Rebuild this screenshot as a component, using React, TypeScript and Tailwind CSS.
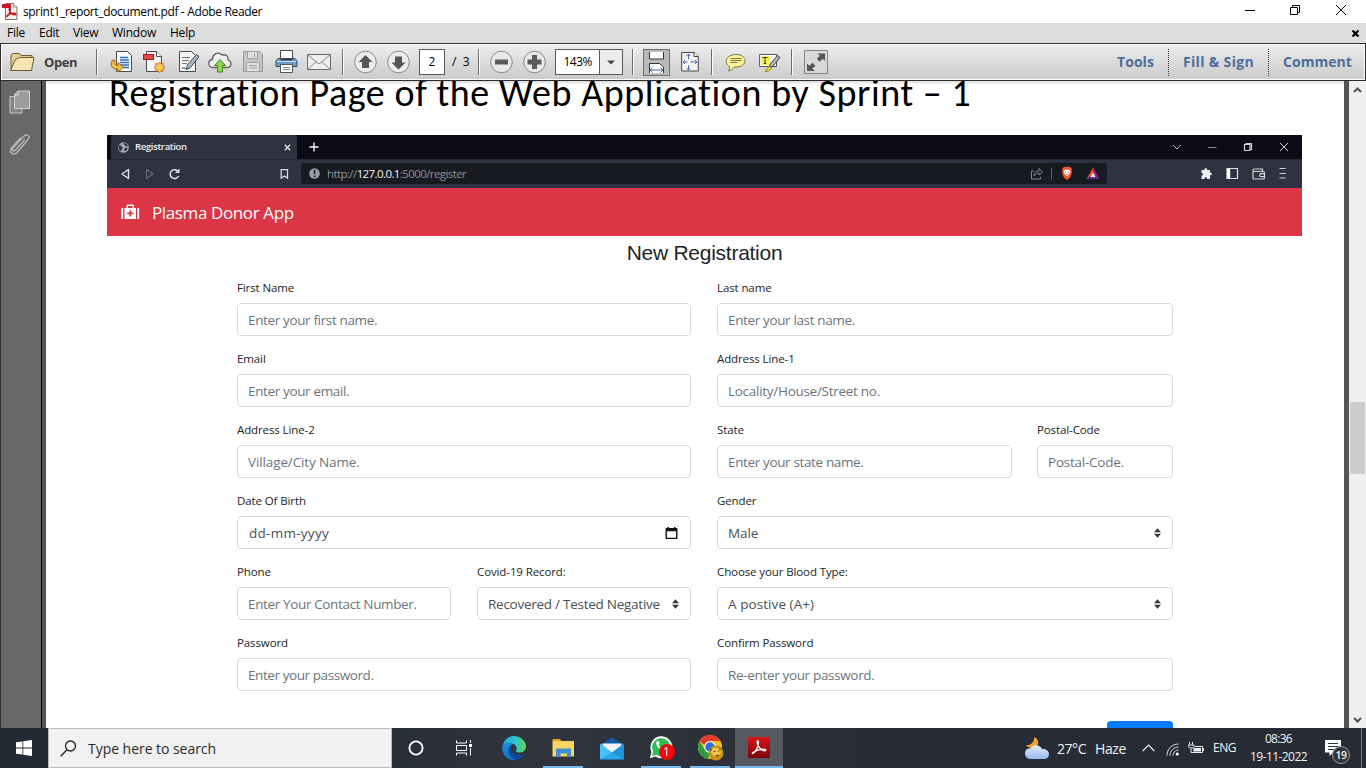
import React from "react";

const UI = "font-['Open_Sans',sans-serif] whitespace-pre";

/* ---------- Reader window ---------- */

function PdfIcon() {
  return (
    <svg className="-mt-px -ml-px" width="16" height="17" viewBox="0 0 16 17">
      <path d="M3.5 .5h8l3.5 3.500v12.500h-11.500z" fill="#f7eeee" stroke="#8d6b6b" strokeWidth="1" />
      <path d="M11.500 .5v3.500h3.500" fill="#fff" stroke="#8d6b6b" strokeWidth=".8" />
      <rect x="0" y="1" width="9" height="4" fill="#c41e24" />
      <path d="M4.500 14C6.500 13 8.500 9 8.300 6c-.3-1.500-1.500-.5-.9 1.200 1 2.600 3 4.600 5.600 4.600 1.500-.2 1-1.500-.9-1.500-2.900 0-5.500 1-7.600 2.500" fill="none" stroke="#c01a20" strokeWidth="1.500" />
    </svg>
  );
}

function TitleBar() {
  return (
    <div className="flex h-[23px] items-center bg-white pl-[3px]">
      <PdfIcon />
      <span className={"ml-[5px] text-[12px] leading-none tracking-[-0.345px] text-black " + UI}>sprint1_report_document.pdf - Adobe Reader</span>
      <svg className="-mt-[3px] mr-px ml-auto" width="120" height="20" viewBox="0 0 120 20" fill="none" stroke="#000">
        <path d="M0 10.500h10M45.500 7.500h7v7h-7zM47.500 7.500v-2h7v7h-2M91 5l10 10M101 5l-10 10" />
      </svg>
    </div>
  );
}

function MenuBar() {
  const item = "text-[12px] leading-none tracking-[-0.23px] text-black " + UI;
  return (
    <div className="flex h-[20px] items-center bg-[#dddddd] pl-[7px]">
      <span className={"w-[32px] " + item}>File</span>
      <span className={"w-[34px] " + item}>Edit</span>
      <span className={"w-[39px] " + item}>View</span>
      <span className={"w-[58px] " + item}>Window</span>
      <span className={item}>Help</span>
      <svg className="mr-[7px] ml-auto" width="7" height="7" viewBox="0 0 7 7" stroke="#000" strokeWidth="2.200">
        <path d="M.5 .5l6 6M6.500 .5l-6 6" />
      </svg>
    </div>
  );
}

const Ico = ({ m, w, children }: { m: string; w: number; children: React.ReactNode }) => (
  <svg className={"shrink-0 " + m} width={w} height="26" viewBox={`0 0 ${w} 26`} fill="none">
    {children}
  </svg>
);

const Sep = ({ m }: { m: string }) => <div className={"h-[26px] w-[2px] shrink-0 border-r border-l border-r-white border-l-[#6b6b6b] " + m} />;

function Toolbar() {
  return (
    <div className="flex h-[38px] items-center border border-[#2c2c30] bg-white p-px">
      <div className="flex h-full w-full items-center bg-linear-to-b from-[#ededed] to-[#cbcbcb]">
        <Ico m="ml-[8px]" w={25}>
          <path d="M1 21V6l1.500-1.500h7L11 6.500h11V10" fill="#e5cf8c" stroke="#6d5a35" />
          <path d="M.7 21.500L5 11l1.500-1 3-1.500H24L21.500 21.500z" fill="#f5e5b0" stroke="#6d5a35" />
        </Ico>
        <span className={"ml-[9px] w-[34px] text-[13px] leading-none font-bold tracking-[-0.45px] text-[#3f3f3f] " + UI}>Open</span>
        <Sep m="ml-[18px]" />
        {/* send for conversion */}
        <Ico m="ml-[12px]" w={23}>
          <path d="M6.500 2.500h11l4 4v16h-15z" fill="#fafafa" stroke="#4a4a4a" />
          <path d="M10 8.500h8M10 11h9M10 13.500h9M10 16h9M13 18.500h6" stroke="#2f6fb5" strokeWidth="1.300" />
          <path d="M2.500 11C-.5 16 2 20.500 8 20V23l5.500-4.700L8 13.500v3c-3 0-4-2-3-5z" fill="#f3c053" stroke="#9a6a14" />
        </Ico>
        {/* create pdf */}
        <Ico m="ml-[10px]" w={23}>
          <path d="M3.500 2.500h10l5 5v15h-15z" fill="#f6f6f6" stroke="#4a4a4a" />
          <path d="M13.500 2.500v5h5" fill="#fff" stroke="#4a4a4a" />
          <rect x=".5" y="5.500" width="10" height="5" fill="#e8474a" stroke="#b0171b" />
          <path d="M16.500 13l1.500 2 2.500-.5-.5 2.500 2 1.300-2 1.400.5 2.500-2.500-.5-1.500 2-1.500-2-2.500.5.5-2.500-2-1.400 2-1.300-.5-2.500 2.500.5z" fill="#f8c55c" stroke="#c98318" />
        </Ico>
        {/* sign */}
        <Ico m="ml-[12px]" w={22}>
          <path d="M1.500 2.500h12l4 4v16h-16z" fill="#f4f4f4" stroke="#4a4a4a" />
          <path d="M4 8.500h8M4 11.500h7M4 14.500h5" stroke="#777" />
          <path d="M18.500 5.500l2.500 2-8.500 11-4 2 1-4.500z" fill="#a9bccd" stroke="#35475b" />
          <path d="M4 19.500c2-2 3 1 5 0" stroke="#333" />
        </Ico>
        {/* cloud */}
        <Ico m="ml-[8px]" w={24}>
          <path d="M5.500 18.500C-.5 18.500-.5 11 4.500 10.500 4 5.500 10 2 14 6c4-1 6.500 1.500 6 5 4.500 1.500 3.500 7.500-1 7.500z" fill="#efefef" stroke="#606060" strokeWidth="1.300" />
          <path d="M12 10.500l5.500 6h-3v6.500h-5v-6.500h-3z" fill="#8fd450" stroke="#3d8a14" />
        </Ico>
        {/* save */}
        <Ico m="ml-[11px]" w={20}>
          <path d="M.5 2.500h16l3 3v17H.5z" fill="#c6c6c6" stroke="#959595" />
          <path d="M4.500 2.500h10v7h-10zM3.500 13.500h13v9h-13z" fill="#e2e2e2" stroke="#a0a0a0" />
          <path d="M11.500 4v4M6 16.500h8M6 19h8" stroke="#9a9a9a" />
        </Ico>
        {/* print */}
        <Ico m="ml-[12px]" w={23}>
          <path d="M5.500 1.500h12v8h-12z" fill="#fff" stroke="#4a4a4a" />
          <path d="M3 9.500h17l2 2.500v5.500H1V12z" fill="#6c9cc8" stroke="#35506d" />
          <path d="M2 12.500h19" stroke="#c5dcf0" />
          <path d="M5.500 9h12v2.500h-12z" fill="#3c4450" />
          <path d="M5.500 15.500h12v8h-12z" fill="#fdfdfd" stroke="#555" />
          <path d="M8 18.500h7M8 20.500h7" stroke="#888" />
        </Ico>
        {/* mail */}
        <Ico m="ml-[9px]" w={24}>
          <path d="M.5 5.500h23v15H.5z" fill="#efefef" stroke="#6a6a6a" />
          <path d="M1 6l11 9 11-9M1 20l8.500-7.500M23 20l-8.500-7.500" stroke="#858585" />
        </Ico>
        <Sep m="ml-[11px]" />
        <Ico m="ml-[10px]" w={23}>
          <circle cx="11.500" cy="13" r="10.800" fill="#ededed" stroke="#8a8a8a" />
          <path d="M11.500 6l7 7h-3.500v6H8v-6H4.500z" fill="#555" />
        </Ico>
        <Ico m="ml-[10px]" w={23}>
          <circle cx="11.500" cy="13" r="10.800" fill="#ededed" stroke="#8a8a8a" />
          <path d="M11.500 20.500l7-7h-3.500v-6H8v6H4.500z" fill="#555" />
        </Ico>
        <div className={"ml-[9px] flex h-[26px] w-[26px] items-center justify-center border border-[#5a5a5a] bg-white text-[12px] text-black " + UI}>2</div>
        <span className={"ml-[7px] w-[19px] text-[12px] leading-none text-black " + UI}>{"/  3"}</span>
        <Sep m="ml-[7px]" />
        <Ico m="ml-[10px]" w={23}>
          <circle cx="11.500" cy="13" r="10.800" fill="#e9e9e9" stroke="#8a8a8a" />
          <path d="M5 10.500h13v5H5z" fill="#5a5a5a" />
        </Ico>
        <Ico m="ml-[10px]" w={23}>
          <circle cx="11.500" cy="13" r="10.800" fill="#e9e9e9" stroke="#8a8a8a" />
          <path d="M4.500 10.500H9V6h5v4.500h4.500v5H14V20H9v-4.500H4.500z" fill="#5a5a5a" />
        </Ico>
        <div className="ml-[9px] flex h-[26px] w-[68px] shrink-0 border border-[#5a5a5a] bg-white">
          <span className={"w-[45px] border-r border-[#5a5a5a] text-center text-[12px] leading-[24px] tracking-[-0.6px] text-black " + UI}>143%</span>
          <div className="flex w-[22px] items-center justify-center bg-[#ececec]">
            <svg width="8" height="5" viewBox="0 0 8 5"><path d="M0 .5h8L4 4.500z" fill="#444" /></svg>
          </div>
        </div>
        <Sep m="ml-[9px]" />
        <div className="ml-[9px] flex h-[27px] w-[27px] shrink-0 items-center justify-center border border-[#6e6e6e] bg-[#b9b9b9]">
          <svg width="19" height="23" viewBox="0 0 19 23" fill="none">
            <path d="M2.500 1v7h14V1" fill="#fff" stroke="#333" />
            <path d="M2.500 22V12.500h10l4 3.500v6" fill="#fff" stroke="#333" />
            <path d="M3 19h13M5.500 16.500L3 19l2.500 2.500M13.500 16.500L16 19l-2.500 2.500" stroke="#4a69b0" />
          </svg>
        </div>
        <Ico m="ml-[11px]" w={18}>
          <path d="M.7 3.500h12.300l4.300 4v14.500H.7z" fill="#f4f4f4" stroke="#444" />
          <path d="M13 3.500v4h4.300" stroke="#444" fill="#fff" />
          <path d="M7.500 5v5M5.500 7l2-2 2 2M7.500 16v5M5.500 19l2 2 2-2M2 13h4.500M4 11l-2 2 2 2M9.500 13H16M14 11l2 2-2 2" stroke="#4a69b0" />
        </Ico>
        <Sep m="ml-[12px]" />
        <Ico m="ml-[12px]" w={22}>
          <path d="M11 5.500c12 0 12 12.500 0 12.500-1 0-1.500 0-2 0-1 2-3 3.500-5.500 4 1-1.500 1.300-3 1-4.500C-1.500 14 .5 5.500 11 5.500z" fill="#fdf59a" stroke="#7b7440" />
          <path d="M5.500 9.500h11M5.500 11.500h11M5.500 13.500h7" stroke="#7b7440" />
        </Ico>
        <Ico m="ml-[12px]" w={22}>
          <path d="M.6 5.500h16.900v12H.6z" fill="#fff" stroke="#555" />
          <path d="M2 7h8v9H2z" fill="#ffee44" />
          <path d="M3.500 8.500h5M6 8.500v6M4.800 14.500h2.400" stroke="#333" />
          <path d="M18.500 6.500l2.500 2-7.500 9-3.500 1 1-3.500z" fill="#b5b5b5" stroke="#444" />
          <path d="M10 17.500l3 1.500-3.500 3-3.500 .5z" fill="#f3e63a" stroke="#8f8620" />
        </Ico>
        <Sep m="ml-[10px]" />
        <Ico m="ml-[11px]" w={25}>
          <path d="M.5 1.500h23v23H.5z" fill="#d9d9d9" stroke="#858585" />
          <path d="M13.500 4.500H21V12l-2.300-2.300-3 3-2.900-3 3-2.900zM3 14.500l2.500 2.300 3-3 2.800 3-3 2.900L11 22H3z" fill="#555" />
        </Ico>
        <span className={"ml-auto w-[38px] text-[14px] leading-none font-bold tracking-[0.06px] text-[#4b6e9c] " + UI}>Tools</span>
        <div className="ml-[13px] h-[27px] border-l border-dotted border-[#333]" />
        <span className={"ml-[14px] w-[72px] text-[14px] leading-none font-bold tracking-[0.33px] text-[#4b6e9c] " + UI}>Fill &amp; Sign</span>
        <div className="ml-[13px] h-[27px] border-l border-dotted border-[#333]" />
        <span className={"mr-[11px] ml-[14px] w-[70px] text-[14px] leading-none font-bold tracking-[0.05px] text-[#4b6e9c] " + UI}>Comment</span>
      </div>
    </div>
  );
}

function SidePanel() {
  return (
    <div className="flex w-[46px] shrink-0">
      <div className="flex w-[41px] flex-col items-center border-l border-[#333] bg-[#686868] pr-[3px]">
        <svg className="mt-[9px]" width="22" height="24" viewBox="0 0 22 24">
          <path d="M1 6.500h12V23H1z" fill="#848484" stroke="#c6c6c6" />
          <path d="M5.500 4.500L9 1h11.500v17.500h-15z" fill="#9d9d9d" stroke="#d0d0d0" />
          <path d="M5.500 5h3.800V1" fill="none" stroke="#dadada" />
        </svg>
        <svg className="mt-[18px]" width="22" height="25" viewBox="0 0 22 25" fill="none" stroke="#b4b4b4" strokeWidth="1.500">
          <path d="M16 7.500L6.500 18c-2 2-4-.3-2.500-2L15 4c3-2.500 6.500 0 4 3.500L8.500 20c-3.500 4-9 1-6-4L12 5.500" />
        </svg>
      </div>
      <div className="w-px bg-black" />
      <div className="w-[4px] bg-[#555555]" />
    </div>
  );
}

function ScrollBar() {
  return (
    <div className="flex w-[22px] shrink-0">
      <div className="w-[5px] bg-[#555555]" />
      <div className="flex flex-1 flex-col items-center bg-[#f0f0f0]">
        <svg className="mt-[6px]" width="9" height="6" viewBox="0 0 9 6" fill="none" stroke="#505050" strokeWidth="2"><path d="M1 5l3.500-3.500L8 5" /></svg>
        <div className="mt-[309px] h-[72px] w-[15px] bg-[#cdcdcd]" />
        <svg className="mt-auto mb-[5px]" width="9" height="6" viewBox="0 0 9 6" fill="none" stroke="#505050" strokeWidth="2"><path d="M1 1l3.500 3.500L8 1" /></svg>
      </div>
    </div>
  );
}

/* ---------- Browser capture inside the document ---------- */

function BrowserBar() {
  return (
    <div className="flex h-[53px] flex-col bg-[#0a0b14]">
      <div className="flex h-[24px] items-center">
        <div className="ml-[4px] flex h-full w-[186px] items-center rounded-t-[3px] bg-[#2f3241]">
          <svg className="ml-[7px]" width="11" height="11" viewBox="0 0 11 11">
            <circle cx="5.500" cy="5.500" r="5.300" fill="#a4a7ad" />
            <path d="M1 3c2 0 2 1 3 2s1 1 0 2-.5 2-1 2.500C1 8 .3 5 1 3zM6 1c2 0 3.500 1.500 4 3-1.500 1-3 0-3.500-1S5 2 6 1zM7 6c1.500-.5 2.500 0 2.500.5S8 9 7 9 6 7 7 6z" fill="#2f3241" />
          </svg>
          <span className={"ml-[6px] text-[9.5px] leading-none font-semibold tracking-[-0.33px] text-[#eceef2] " + UI}>Registration</span>
          <svg className="mr-[6px] ml-auto" width="7" height="7" viewBox="0 0 7 7" stroke="#e6e6ea" strokeWidth="1.300"><path d="M.8 .8l5.400 5.400M6.200 .8L.8 6.200" /></svg>
        </div>
        <svg className="ml-[12px]" width="10" height="10" viewBox="0 0 10 10" stroke="#fff" strokeWidth="1.300"><path d="M5 .5v9M.5 5h9" /></svg>
        <svg className="mr-[13px] ml-auto" width="118" height="12" viewBox="0 0 118 12" fill="none" stroke="#d2d2d6">
          <path d="M2 4l4 4 4-4" stroke="#b9b9be" />
          <path d="M37 6.500h8.500" stroke="#8e8e94" />
          <path d="M73.500 3.500h5.500v6h-5.500zM75 3.500v-1h5.500v6h-1" strokeWidth="1.200" />
          <path d="M109 2l8 8M117 2l-8 8" />
        </svg>
      </div>
      <div className="flex h-[29px] items-center border-t border-[#252733] bg-[#2f3241] pb-px">
        <svg className="ml-[13px]" width="62" height="14" viewBox="0 0 62 14" fill="none">
          <path d="M8.500 2.500v9L2 7z" stroke="#e4e4e8" strokeWidth="1.400" strokeLinejoin="round" />
          <path d="M26.500 2.500v9L33 7z" stroke="#6c6e79" strokeWidth="1.100" strokeLinejoin="round" />
          <path d="M58.500 9a4.400 4.400 0 1 1-1.200-5.400" stroke="#e4e4e8" strokeWidth="1.500" />
          <path d="M59.500 1.500v4.500h-4.500z" fill="#e4e4e8" />
        </svg>
        <svg className="ml-[98px]" width="9" height="10" viewBox="0 0 9 10" fill="none" stroke="#dcdce0" strokeWidth="1.300"><path d="M1.200 .7h6.300v8.500L4.400 7 1.200 9.200z" /></svg>
        <div className="ml-[12px] flex h-[21px] w-[806px] items-center rounded-[3px] bg-[#171a21]">
          <svg className="ml-[8px]" width="11" height="11" viewBox="0 0 11 11"><circle cx="5.500" cy="5.500" r="5.300" fill="#9b9ea5" /><path d="M4.800 2h1.500v4.300H4.800zM4.800 7.400h1.500v1.500H4.800z" fill="#171a21" /></svg>
          <span className={"ml-[7px] text-[11.5px] leading-none tracking-[-0.59px] text-[#8d9097] " + UI}>http://<span className="text-[#f2f2f4]">127.0.0.1</span>:5000/register</span>
          <svg className="mr-[7px] ml-auto" width="70" height="15" viewBox="0 0 70 15" fill="none">
            <path d="M4 5H1.500v8h9v-2M4 10c0-4 2.500-5 5-5V2.500L12.500 6 9 9V7C7 7 5.500 8 4 10z" stroke="#85888f" />
            <path d="M21.500 1.500v12" stroke="#5d6069" />
            <path d="M34 .8h6l2 2-.6 1.700.6 2-1.800 5-3.200 2.700-3.200-2.700-1.800-5 .6-2-.6-1.700z" fill="#f05423" />
            <path d="M34 4l2-.5 1 .5 1-.5 2 .5.600 1.500-1.600 3-2 2-2-2-1.600-3z" fill="#fff" />
            <path d="M35 6l1.200.5M39 6l-1.200.5M36 8.500h2" stroke="#f05423" strokeWidth=".8" />
            <path d="M63 1.500L56.500 13H63z" fill="#f04e22" /><path d="M63 1.500L69.500 13H63z" fill="#9d2589" /><path d="M56.500 13l3.300-3h6.400l3.300 3z" fill="#5b2b86" />
            <path d="M63 6.500l-2.500 4.500h5z" fill="#fff" />
          </svg>
        </div>
        <svg className="mr-[12px] ml-auto" width="90" height="15" viewBox="0 0 90 15" fill="none">
          <path d="M1.500 4h3c-.8-2.500 3.300-2.500 2.600 0H10v2.800c2.500-.7 2.500 3 0 2.500V13H7c.6-2.200-3-2.200-2.500 0h-3V9.500c2 .4 2-2.900 0-2.500z" fill="#f0f0f2" />
          <path d="M27 2.500h10.500v10H27z" stroke="#dcdce0" strokeWidth="1.200" /><path d="M27 2.500h3.200v10H27z" fill="#fff" />
          <path d="M53 5V4.500c0-1 .3-1.500 1.500-1.500h8v2.500M53 5.500h10c1 0 1.500.3 1.500 1.200v5c0 .8-.5 1.300-1.500 1.300h-8.500c-1 0-1.500-.5-1.500-1.300zM64.500 7.700h-3.500c-1.800 0-1.800 3 0 3h3.500z" stroke="#d5d5da" strokeWidth="1.200" />
          <path d="M79.500 2.500h6M79.500 7.500h6.500M79.500 12h6" stroke="#cfcfd5" />
        </svg>
      </div>
    </div>
  );
}

function AppBar() {
  return (
    <div className="flex h-[48px] items-center bg-[#dc3545]">
      <svg className="ml-[14px]" width="19" height="16" viewBox="0 0 19 16" fill="#fff">
        <path d="M2.200 4v11H1.500C.7 15 .3 14.500 .3 14V5c0-.6.500-1 1.200-1zM16.300 4v11h.7c.800 0 1.200-.5 1.200-1V5c0-.6-.5-1-1.200-1z" />
        <path fillRule="evenodd" d="M3.500 4H5.500V2.200C5.500 1 6 .5 7 .5h4.500c1 0 1.500.5 1.500 1.700V4h2v11H3.500zM7 4h4.500V2H7zM8.400 6.200v2.300H6.100v1.800h2.300v2.300h1.800v-2.300h2.300V8.500h-2.300V6.200z" />
      </svg>
      <span className={"ml-[12px] text-[17px] leading-none tracking-[-0.38px] text-white " + UI}>Plasma Donor App</span>
    </div>
  );
}

type FieldProps = { label: string; text: string; w: string; kind?: "input" | "select" | "date"; track?: string };

function Field({ label, text, w, kind = "input", track = "tracking-[-0.36px]" }: FieldProps) {
  return (
    <div className={"flex shrink-0 flex-col " + w}>
      <div className={"h-[23px] pt-px text-[11.5px] leading-[13px] tracking-[-0.11px] text-[#212529] " + UI}>{label}</div>
      <div className="flex h-[33px] items-center justify-between rounded-[4px] border border-[#d7dbe0] bg-white pr-[12px] pl-[10px]">
        <span className={"pt-px text-[13.5px] leading-[15px] " + UI + " " + track + (kind === "input" ? " text-[#6c757d]" : " text-[#495057]")}>{text}</span>
        {kind === "select" && (
          <svg className="-mr-px" width="7" height="10" viewBox="0 0 7 10" fill="#343a40"><path d="M3.500 .3L7 4.200H0zM3.500 9.700L7 5.800H0z" /></svg>
        )}
        {kind === "date" && (
          <svg width="13" height="12" viewBox="0 0 13 12"><path fillRule="evenodd" d="M2.500 0H4v1h5V0h1.500v1h1c.6 0 1 .4 1 1v9c0 .6-.4 1-1 1h-10c-.6 0-1-.4-1-1V2c0-.6.4-1 1-1h1zM1.900 4.200v6.500h9.200V4.200z" fill="#111" /></svg>
        )}
      </div>
    </div>
  );
}

function RegistrationForm() {
  return (
    <div className="flex flex-col">
      <h1 className="h-[44px] pt-[3px] text-center font-['Liberation_Sans',sans-serif] text-[21px] leading-[27px] tracking-[-0.26px] text-[#212529]">New Registration</h1>
      <div className="flex flex-col gap-[15px] pl-[130px]">
        <div className="flex gap-[26px]">
          <Field w="w-[454px]" label="First Name" text="Enter your first name." />
          <Field w="w-[456px]" label="Last name" text="Enter your last name." />
        </div>
        <div className="flex gap-[26px]">
          <Field w="w-[454px]" label="Email" text="Enter your email." />
          <Field w="w-[456px]" label="Address Line-1" text="Locality/House/Street no." track="tracking-[-0.28px]" />
        </div>
        <div className="flex gap-[26px]">
          <Field w="w-[454px]" label="Address Line-2" text="Village/City Name." track="tracking-[-0.12px]" />
          <div className="flex gap-[25px]">
            <Field w="w-[295px]" label="State" text="Enter your state name." />
            <Field w="w-[136px]" label="Postal-Code" text="Postal-Code." track="tracking-[-0.24px]" />
          </div>
        </div>
        <div className="flex gap-[26px]">
          <Field w="w-[454px]" label="Date Of Birth" text="dd-mm-yyyy" kind="date" track="tracking-[0.27px] pl-[1px]" />
          <Field w="w-[456px]" label="Gender" text="Male" kind="select" track="tracking-[-0.1px]" />
        </div>
        <div className="flex gap-[26px]">
          <Field w="w-[214px]" label="Phone" text="Enter Your Contact Number." track="tracking-[-0.36px]" />
          <div className="flex">
            <Field w="w-[214px]" label="Covid-19 Record:" text="Recovered / Tested Negative" kind="select" track="tracking-[-0.26px]" />
          </div>
          <Field w="w-[456px]" label="Choose your Blood Type:" text="A postive (A+)" kind="select" track="tracking-[0.07px]" />
        </div>
        <div className="flex gap-[26px]">
          <Field w="w-[454px]" label="Password" text="Enter your password." track="tracking-[-0.42px]" />
          <Field w="w-[456px]" label="Confirm Password" text="Re-enter your password." track="tracking-[-0.34px]" />
        </div>
      </div>
      <div className="mt-[30px] ml-[1000px] h-[33px] w-[66px] rounded-[4px] bg-[#007bff]" />
    </div>
  );
}

function Document() {
  return (
    <div className="flex min-w-0 flex-1 flex-col overflow-hidden bg-white">
      <div className="h-[4px] shrink-0 bg-linear-to-b from-[#dcdcdc] to-white" />
      <div className="-mt-[4px] flex h-[54px] shrink-0 items-start pl-[63px]">
        <span className="-mt-[11px] font-['Carlito','Lato',sans-serif] text-[38px] leading-[46px] tracking-[0.58px] whitespace-pre text-black">Registration Page of the Web Application by Sprint – 1</span>
      </div>
      <div className="ml-[61px] w-[1195px]">
        <BrowserBar />
        <AppBar />
        <RegistrationForm />
      </div>
    </div>
  );
}

/* ---------- Windows taskbar ---------- */

const Task = ({ children, open, active }: { children: React.ReactNode; open?: boolean; active?: boolean }) => (
  <div className={"flex h-full shrink-0 flex-col items-center " + (active ? "ml-px w-[48px] bg-[#555960]" : "w-[49px]")}>
    <div className="flex flex-1 items-center pt-[2px]">{children}</div>
    <div className={"h-[2px] " + (active ? "w-full bg-[#76b9ed]" : open ? "w-[40px] bg-[#76b9ed]" : "w-0")} />
  </div>
);

function Taskbar() {
  return (
    <div className="flex h-[40px] shrink-0 bg-linear-to-r from-[#232a34] from-20% via-[#30353d] via-40% to-[#262b35] to-65%">
      <div className="flex w-[48px] items-center justify-center">
        <svg width="16" height="16" viewBox="0 0 16 16" fill="#fff"><path d="M0 2.300l6.500-.9v6.200H0zM7.300 1.300L16 0v7.600H7.300zM0 8.400h6.500v6.200L0 13.700zM7.300 8.400H16V16l-8.700-1.300z" /></svg>
      </div>
      <div className="flex w-[344px] items-center border border-[#bdbdbd] bg-[#f1f1f1]">
        <svg className="ml-[11px]" width="17" height="17" viewBox="0 0 17 17" fill="none" stroke="#222" strokeWidth="1.300"><circle cx="10.500" cy="6" r="5" /><path d="M7 9.800L.7 16.200" /></svg>
        <span className={"ml-[11px] pt-px text-[14px] leading-[16px] tracking-[-0.04px] text-[#2b2b2b] " + UI}>Type here to search</span>
      </div>
      <div className="-ml-px flex">
        <Task><svg width="16" height="16" viewBox="0 0 16 16"><circle cx="8" cy="8" r="6.600" fill="none" stroke="#fff" strokeWidth="1.900" /></svg></Task>
        <Task>
          <svg width="17" height="16" viewBox="0 0 17 16" fill="none" stroke="#fff"><path d="M.5 .5v2.500h10V.5M.5 15.500V13h10v2.500M.5 5.500h10v5H.5zM14.500 0v3M14.500 8v7.500" /><path d="M13 4h3v3h-3z" fill="#fff" stroke="none" /></svg>
        </Task>
        <Task>
          <svg className="ml-px" width="24" height="24" viewBox="0 0 24 24">
            <defs>
              <linearGradient id="edgeTop" x1="0" x2="1"><stop offset="0" stopColor="#1f9fe0" /><stop offset=".55" stopColor="#2cc3cf" /><stop offset="1" stopColor="#65d84e" /></linearGradient>
              <linearGradient id="edgeLow" x1="0" y1="0" x2="0" y2="1"><stop offset="0" stopColor="#1b8fe0" /><stop offset="1" stopColor="#0f6fc8" /></linearGradient>
            </defs>
            <path d="M.5 10C1.500 4 6.500 0 12 0c7 0 12 5.500 12 10.500 0 4-3.500 6-6.500 6-2.500 0-4-1-3.500-2 1.500-2 .8-5.500-3-6.500C7 7 2 8 .5 10z" fill="url(#edgeTop)" />
            <path d="M.2 11C1.500 7.500 7 6.500 10.500 8c-4 2-3.500 6 -1.500 8.500 3 3.500 8.500 4 12.500 2C19 22.500 15.500 24 12 24 5 24-.5 18 .2 11z" fill="url(#edgeLow)" />
            <path d="M9 9c-4.500 3-3 11 3.500 14.800 4 .2 7-2 8.900-4.600.3-.5-.2-.8-.6-.6C15 21 8 17 9 9z" fill="#0c4a9e" />
          </svg>
        </Task>
        <Task open>
          <svg className="ml-[2px]" width="23" height="18" viewBox="0 0 23 18"><path d="M.5 2V.8C.5.3.8 0 1.300 0H8l1.500 2z" fill="#e2a21b" /><path d="M.5 2H22v15.500H.5z" fill="#fbd564" /><path d="M4 9.500h15V18h-4v-3.500H8.500V18H4z" fill="#3f8fd6" /></svg>
        </Task>
        <Task>
          <svg className="ml-px" width="24" height="23" viewBox="0 0 24 23"><path d="M0 8L12 .5 24 8v3H0z" fill="#0b5dad" /><path d="M2.500 6.500h19V15h-19z" fill="#f4f6f8" /><path d="M0 6.500l12 9 12-9v16H0z" fill="#2aa7ec" /><path d="M0 22.500L12 15.500 0 6.500z" fill="#47c1f6" /><path d="M12 15.500l12-9v16z" fill="#1b84d6" opacity=".6" /></svg>
        </Task>
        <Task open>
          <div className="relative flex h-[26px] w-[24px]">
            <svg width="24" height="24" viewBox="0 0 24 24"><path d="M.8 23.200L2.500 17A11 11 0 1 1 6.500 21.500z" fill="#fff" /><path d="M3 21l1.200-4.500A9 9 0 1 1 7.300 19.800z" fill="#2bbf50" /><path d="M8.500 6c-2 1-1.500 4 1 6.800s6 4.200 7.500 2.700c1-1.300.5-1.800-1.700-2.700-1 .2-1 1.200-1.800 1-1.800-.7-3-2-3.700-3.500 0-.7 1-1 .7-1.800C10 6.500 9.500 5.500 8.500 6z" fill="#fff" /></svg>
            <div className="absolute top-[9px] left-[10px] flex h-[16px] w-[16px] items-center justify-center rounded-full bg-[#f3070b] font-['Open_Sans',sans-serif] text-[12px] leading-none text-white">1</div>
          </div>
        </Task>
        <Task open>
          <svg className="ml-[3px]" width="26" height="26" viewBox="0 0 26 26">
            <circle cx="12" cy="12" r="12" fill="#fbc116" />
            <path d="M12 0a12 12 0 0 1 10.400 6H12a6 6 0 0 0-5.500 4L1.500 6.200A12 12 0 0 1 12 0z" fill="#e33b2e" />
            <path d="M1.500 6.200L7 15c1 2 3 3 5 3l-2 5.800A12 12 0 0 1 1.500 6.200z" fill="#2a9d4a" />
            <circle cx="12" cy="12" r="5.800" fill="#fff" /><circle cx="12" cy="12" r="4.700" fill="#2c6fe0" />
            <circle cx="18" cy="18" r="7.500" fill="#c8921d" />
            <path d="M13 15c2-3 7-3 9 0s0 5-1.500 6-4 1-5.500-1-3-3-2-5z" fill="#eec64d" /><path d="M15.500 16.500h2M20 16h1.500M17.500 20.500c1.500.6 2.500.3 3.500-.5" stroke="#6b4308" strokeWidth="1.200" />
            <path d="M11 13l3 1-1 3zM21 11.500l3 2-2.500 1z" fill="#8b5a10" />
          </svg>
        </Task>
        <Task active>
          <svg className="-mt-[2px]" width="22" height="21" viewBox="0 0 22 21"><defs><linearGradient id="acro" x1="0" y1="0" x2="0" y2="1"><stop offset="0" stopColor="#d9141a" /><stop offset="1" stopColor="#7d0408" /></linearGradient></defs><path d="M0 0h22v21H0z" fill="url(#acro)" /><path d="M4.500 16.500c3-1 6-7 6-11 0-2-1.500-2-1.300 0 .5 4 4 8 7.300 8.300 2 0 1.500-1.600-.5-1.600-4 0-7.500 1-10.500 2.800-1.200.8-1.500 1.500-1 1.500z" fill="none" stroke="#fff" strokeWidth="1.300" /></svg>
        </Task>
      </div>
      <div className="mr-px ml-auto flex items-center text-[#f2f2f2]">
        <svg width="26" height="24" viewBox="0 0 26 24">
          <defs><linearGradient id="cloud" x1="0" y1="0" x2="0" y2="1"><stop offset="0" stopColor="#e4effc" /><stop offset="1" stopColor="#94b9ec" /></linearGradient></defs>
          <path d="M10 1c4 1.500 5.500 6 3 9s-8 3-11-1c4 1 9-3 8-8z" fill="#f6a52b" /><path d="M1 17c0-4 3.500-5 5.500-4.500C8 8.500 15.500 7.500 18 13c4-.5 7 2 7 5 0 3-2 5-5 5H6c-3 0-5-2.500-5-6z" fill="url(#cloud)" />
        </svg>
        <span className={"ml-[7px] w-[38px] pt-px text-[14px] leading-[16px] tracking-[-0.45px] " + UI}>27°C</span>
        <span className={"w-[47px] pt-px text-[14px] leading-[16px] tracking-[-0.38px] " + UI}>Haze</span>
        <svg width="13" height="8" viewBox="0 0 13 8" fill="none" stroke="#eee" strokeWidth="1.200"><path d="M.7 7L6.500 1.200 12.300 7" /></svg>
        <svg className="mt-[3px] ml-[11px]" width="14" height="13" viewBox="0 0 14 13" fill="none" stroke="#d8d8d8"><path d="M1 12.500C1 6 6 1 12.500 1M4 12.500C4 8 8 4 12.500 4M7 12.500C7 9.500 9.500 7 12.500 7" /><circle cx="11.300" cy="11" r="1.600" fill="#fff" stroke="none" /></svg>
        <svg className="ml-[8px]" width="17" height="13" viewBox="0 0 17 13" fill="none" stroke="#eee"><path d="M1.500 0v2.500M4.500 0v2.500M0 3h6v1.500c0 2-4 2-6 0zM3 6.500v4h11.500v-6H7" /><path d="M5.500 6h7.500v3.500H5.500z" fill="#eee" stroke="none" /><path d="M15.500 6v3" /></svg>
        <span className={"ml-[8px] w-[24px] text-[12px] leading-none tracking-[-0.48px] " + UI}>ENG</span>
        <div className="ml-[12px] flex w-[59px] flex-col items-center gap-[6px] text-[12px] leading-[12px]">
          <span className={"tracking-[-0.7px] " + UI}>08:36</span>
          <span className={"tracking-[-0.56px] " + UI}>19-11-2022</span>
        </div>
        <div className="relative ml-[17px] h-[40px] w-[27px]">
          <svg className="mt-[12px]" width="16" height="16" viewBox="0 0 16 16"><path d="M0 0h16v12.500H8L4.500 16v-3.500H0z" fill="#fff" /><path d="M3 3.500h10M3 6.500h10M3 9.500h6" stroke="#2a2f38" /></svg>
          <div className="absolute top-[18px] left-[7px] flex h-[18px] w-[18px] items-center justify-center rounded-full border border-[#a0a3a8] bg-[#30343c] font-['Open_Sans',sans-serif] text-[10.5px] leading-none font-semibold tracking-[-0.4px]">19</div>
        </div>
        <div className="mr-[3px] ml-[9px] h-[40px] w-px bg-[#777b82]" />
      </div>
    </div>
  );
}

export default function App() {
  return (
    <div className="flex h-[768px] w-[1366px] flex-col overflow-hidden bg-white">
      <TitleBar />
      <MenuBar />
      <Toolbar />
      <div className="flex min-h-0 flex-1">
        <SidePanel />
        <Document />
        <ScrollBar />
      </div>
      <Taskbar />
    </div>
  );
}
